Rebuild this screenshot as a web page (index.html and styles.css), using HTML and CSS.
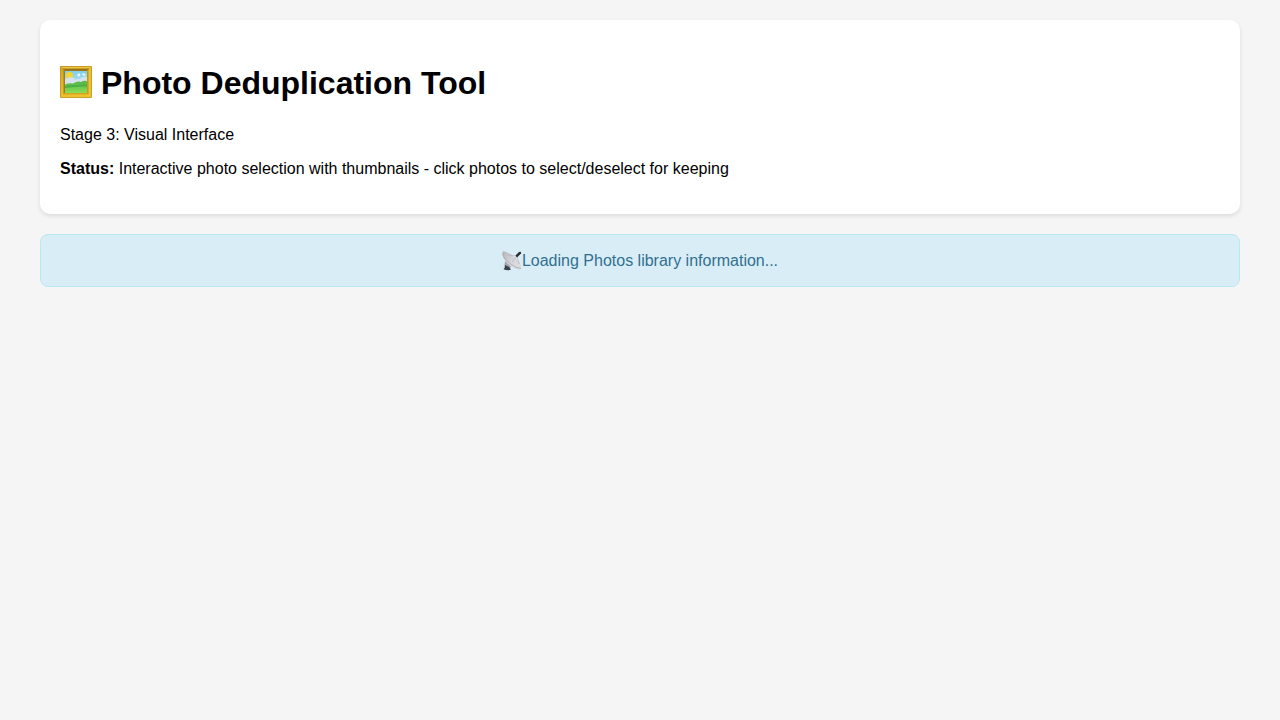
FILE: index.html
```html
<!DOCTYPE html>
<html lang="en">
<head>
<meta charset="utf-8">
<meta name="viewport" content="width=device-width, initial-scale=1">
<title>Photo Deduplication Tool</title>
<link rel="stylesheet" href="styles.css">
</head>
<body>
<main class="container">
<header class="header">
<h1 class="title">
<svg class="title-icon" viewBox="0 0 32 32" aria-hidden="true">
<defs>
<linearGradient id="gold" x1="0" y1="0" x2="1" y2="1"><stop offset="0" stop-color="#d4a21e"/><stop offset=".5" stop-color="#edc12c"/><stop offset="1" stop-color="#f0c42e"/></linearGradient>
<linearGradient id="sky" x1="0" y1="0" x2="0" y2="1"><stop offset="0" stop-color="#7fcfe8"/><stop offset="1" stop-color="#d5eff8"/></linearGradient>
<linearGradient id="grass" x1="0" y1="0" x2="0" y2="1"><stop offset="0" stop-color="#4fb546"/><stop offset="1" stop-color="#8fe058"/></linearGradient>
<clipPath id="canvas"><rect x="5" y="5" width="22" height="22"/></clipPath>
</defs>
<rect width="32" height="32" rx="1" fill="#b8902b"/>
<rect x=".7" y=".7" width="30.6" height="30.6" fill="url(#gold)"/>
<path d="M2 2H30L27 5H5Z" fill="#9c741b"/>
<path d="M1 1H31L29 2.5H3Z" fill="#f0c63c"/>
<path d="M3.5 3.5L5 5V27L3.5 28.5Z" fill="#a67a18"/>
<path d="M28.5 3.5L27 5V27L28.5 28.5Z" fill="#c69820"/>
<path d="M3.5 28.5L5 27H27L28.5 28.5Z" fill="#d5a51f"/>
<g clip-path="url(#canvas)">
<rect x="5" y="5" width="22" height="22" fill="url(#sky)"/>
<circle cx="9.5" cy="9.5" r="3.4" fill="#f6d52d"/>
<path d="M5 14Q6 11 8 12.5Q10 10 12 12Q14 11 15 14Q18 12 20 13Q22 10 27 11V19H5Z" fill="#d8e2ee"/>
<path d="M17 9Q19 6 20 8Q21 10 18 10.5ZM22 8Q24 6 26 9L24 10Z" fill="#edf6fb"/>
<path d="M5 18.5Q9 16.5 13 17.5Q18 14.5 21 16Q25 14 27 15.5V28H5Z" fill="url(#grass)"/>
<path d="M5 20Q12 18 17 19Q22 18 27 18.5V20.5Q17 20 5 22Z" fill="#4cb044"/>
</g>
</svg>
<span>Photo Deduplication Tool</span>
</h1>
<p>Stage 3: Visual Interface</p>
<p><strong>Status:</strong> Interactive photo selection with thumbnails - click photos to select/deselect for keeping</p>
</header>
<div class="status" role="status">
<svg class="status-icon" viewBox="0 0 20 20" aria-hidden="true">
<defs><linearGradient id="dish" x1="0" y1="0" x2="1" y2="1"><stop offset="0" stop-color="#b4b4b8"/><stop offset=".5" stop-color="#d6d6da"/><stop offset="1" stop-color="#dedee3"/></linearGradient></defs>
<path d="M3 10L9 15L8 18H2Z" fill="#a1a6ab"/>
<path d="M3 14L7 16L9 18.5Q6 20 2 18.5Q1 18 3 17Z" fill="#35434b"/>
<path d="M1 0Q-1 5 4 10.5Q9 17 17 19Q21 17.5 18 11.5Q11 2.5 1 0Z" fill="url(#dish)"/>
<path d="M.7 2Q1 7 8 12.5Q14 17.5 19 17.5" fill="none" stroke="#a4a4ac" stroke-width=".8"/>
<path d="M10 11L15 5M6 4L15 5L17 13" fill="none" stroke="#a6a6ac" stroke-width=".5"/>
<path d="M13.5 4.5L17 1Q19.5 0 19 2.5L15 6.5Z" fill="#292c30"/>
</svg>
<span>Loading Photos library information...</span>
</div>
</main>
</body>
</html>
```

FILE: styles.css
```css
body {
  margin: 0;
  padding: 20px;
  background: #f5f5f5;
  color: #000;
  font-family: "Liberation Sans", Arial, sans-serif;
}

.container {
  max-width: 1200px;
  margin: 0 auto;
}

.header {
  margin-bottom: 20px;
  padding: 20px;
  border-radius: 10px;
  background: #fff;
  box-shadow: 0 2px 4px rgba(0, 0, 0, 0.1);
}

.title {
  display: flex;
  align-items: center;
  gap: 9px;
  margin: 22px 0;
  font-size: 32px;
  line-height: 42px;
}

.title-icon {
  flex: none;
  width: 32px;
  height: 32px;
  margin-bottom: 2px;
}

.status {
  display: flex;
  align-items: center;
  justify-content: center;
  padding: 15px;
  border: 1px solid #b8e9f0;
  border-radius: 8px;
  background: #d9edf7;
  color: #31708f;
  line-height: 21px;
}

.status-icon {
  flex: none;
  width: 20px;
  height: 20px;
}
```
